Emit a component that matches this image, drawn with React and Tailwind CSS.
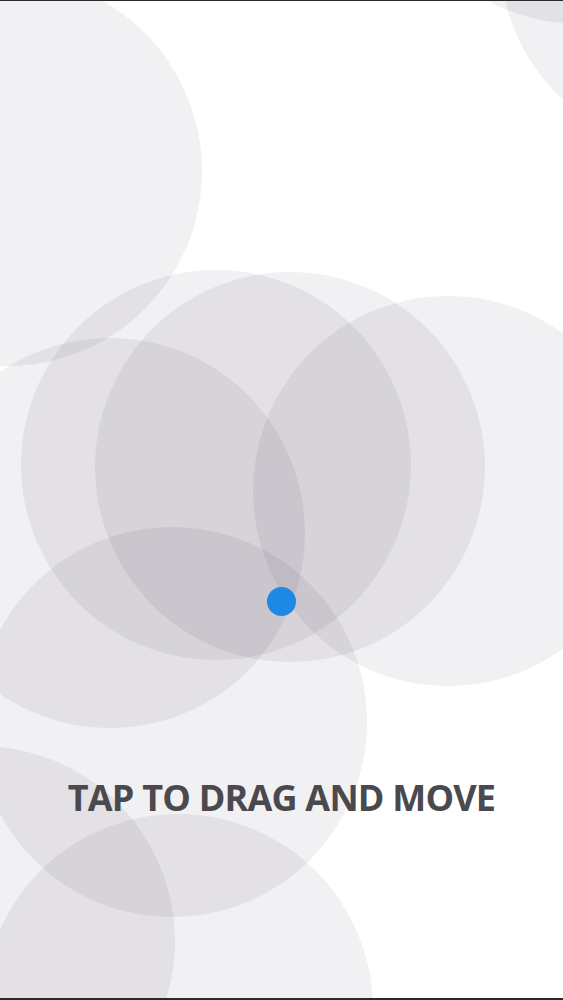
// Drag-and-move demo screen: translucent bubbles on a white canvas,
// a draggable blue handle and a caption.

function Bubble({ className }) {
  return (
    <div
      className={`absolute h-[390px] w-[390px] rounded-full bg-[rgba(12,2,28,0.06)] ${className}`}
    />
  );
}

export default function App() {
  return (
    <div className="relative h-[1000px] w-full overflow-hidden border-t border-b-2 border-t-[#2a2a2c] border-b-[#2a2a2c] bg-white font-['Open_Sans',sans-serif]">
      {/* bubble canvas */}
      <div className="pointer-events-none absolute inset-0">
        <Bubble className="left-[-188px] top-[-25px]" />
        <Bubble className="left-[500px] top-[-240px]" />
        <Bubble className="left-[385px] top-[-367px]" />
        <Bubble className="left-[21px] top-[269px]" />
        <Bubble className="left-[95px] top-[271px]" />
        <Bubble className="left-[253px] top-[295px]" />
        <Bubble className="left-[-85px] top-[337px]" />
        <Bubble className="left-[-23px] top-[526px]" />
        <Bubble className="left-[-215px] top-[745px]" />
        <Bubble className="left-[-17px] top-[813px]" />
      </div>

      {/* drag handle */}
      <div className="absolute left-[267px] top-[586px] h-[29px] w-[29px] rounded-full bg-[#1e88e5]" />

      <div className="relative flex flex-col items-center pt-[779px]">
        <p className="text-[36px] font-bold leading-none tracking-[-0.8px] text-[#4a494d]">
          TAP TO DRAG AND MOVE
        </p>
      </div>
    </div>
  );
}
